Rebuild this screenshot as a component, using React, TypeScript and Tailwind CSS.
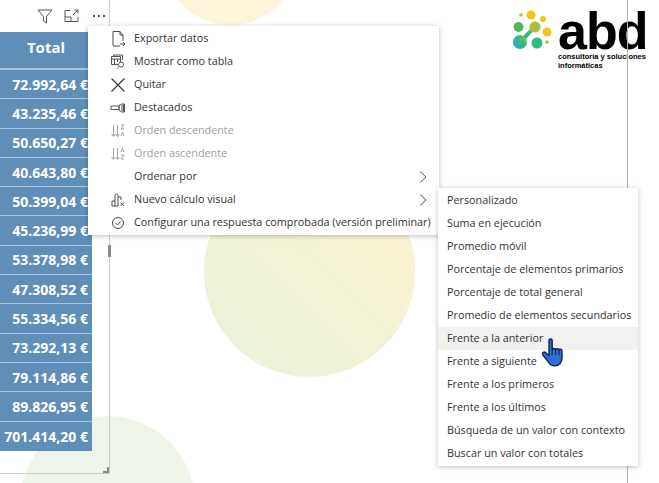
const rows = [
  "72.992,64 €",
  "43.235,46 €",
  "50.650,27 €",
  "40.643,80 €",
  "50.399,04 €",
  "45.236,99 €",
  "53.378,98 €",
  "47.308,52 €",
  "55.334,56 €",
  "73.292,13 €",
  "79.114,86 €",
  "89.826,95 €",
  "701.414,20 €",
];

const subItems = [
  "Personalizado",
  "Suma en ejecución",
  "Promedio móvil",
  "Porcentaje de elementos primarios",
  "Porcentaje de total general",
  "Promedio de elementos secundarios",
  "Frente a la anterior",
  "Frente a siguiente",
  "Frente a los primeros",
  "Frente a los últimos",
  "Búsqueda de un valor con contexto",
  "Buscar un valor con totales",
];

const ExportIcon = () => (
  <svg width="16" height="16" viewBox="0 0 16 16" fill="none" stroke="#4a4a4a" strokeWidth="1">
    <path d="M3 .5h7l3 3.500v6M10 .5V4h3M3 .5v13.500a1 1 0 0 0 1 1h6" />
    <path d="M10 13h5M13 11l2 2-2 2" />
  </svg>
);

const TableIcon = () => (
  <svg width="16" height="16" viewBox="0 0 16 16" fill="none" stroke="#555" strokeWidth="1">
    <path d="M1.500 2.500h9v8h-9zM1.500 5h9M4.500 5v5.500M7.500 5v3" />
    <path d="M3.500 2.500V1h9v5" />
    <circle cx="11" cy="10.500" r="2.500" fill="#fff" />
    <path d="M9 12.500L7 14.500" />
  </svg>
);

const CloseIcon = () => (
  <svg width="16" height="16" viewBox="0 0 16 16" fill="none" stroke="#333" strokeWidth="1.100">
    <path d="M1.500 1.500l13 13M14.500 1.500l-13 13" />
  </svg>
);

const SpotlightIcon = () => (
  <svg width="16" height="16" viewBox="0 0 16 16" fill="none" stroke="#555" strokeWidth="1">
    <path d="M1 6h8v3.500H1z" />
    <path d="M9 5.500l2.500-1.500h3v8h-3L9 10z" />
    <path d="M12 4.500v7M13.500 4.500v7" />
  </svg>
);

const SortIcon = ({ down }: { down: boolean }) => (
  <svg width="16" height="16" viewBox="0 0 16 16" fill="none" stroke="#a3a3a3" strokeWidth="1">
    <path d="M3.500 2v11M1.500 11l2 2.500 2-2.500" />
    <path d="M7.500 2v11M5.500 11l2 2.500 2-2.500" />
    <path d={down ? "M11 2h3l-3 4h3M11 13l1.500-4 1.500 4" : "M11 6l1.500-4L14 6M11 9h3l-3 4h3"} />
  </svg>
);

const CalcIcon = () => (
  <svg width="16" height="16" viewBox="0 0 16 16" fill="none" stroke="#4a4a4a" strokeWidth="1">
    <path d="M2 14V9h3V3.500a1.500 1.500 0 0 1 3 0V5h3v3M2 14h6M5 9v5M8 5v9" />
    <path d="M10.500 10.500l3.500 3.500M14 10.500l-3.500 3.500" />
  </svg>
);

const CheckIcon = () => (
  <svg width="16" height="16" viewBox="0 0 16 16" fill="none" stroke="#4a4a4a" strokeWidth="1">
    <circle cx="8" cy="8" r="5.500" />
    <path d="M5.500 8l2 2 3-3.500" />
  </svg>
);

const Chevron = () => (
  <svg width="8" height="12" viewBox="0 0 8 12" fill="none" stroke="#555" strokeWidth="1">
    <path d="M1 0.500l6 5.500-6 5.500" />
  </svg>
);

const Hand = () => (
  <svg width="25" height="31" viewBox="0 0 28 34">
    <path
      d="M9 3.500c0-2.400 3.500-2.400 3.500 0V14c.5-2 3.500-2 3.800 0 .5-1.800 3.500-1.800 3.800.3.500-1.500 3.400-1.200 3.400 1v7.500c0 5-3 9.200-8 9.200-4 0-6-2-8-5.500L2 19.500c-1.200-2.200 1.500-4 3.300-2.300L9 20.500z"
      fill="#2f6fd6"
      stroke="#10234f"
      strokeWidth="1.600"
      strokeLinejoin="round"
    />
    <path d="M12.500 14v6M16.300 14v6M20.100 14.300v6" stroke="#10234f" strokeWidth="1.200" />
  </svg>
);

const MenuRow = ({
  label,
  icon,
  muted,
  arrow,
}: {
  label: string;
  icon?: React.ReactNode;
  muted?: boolean;
  arrow?: boolean;
}) => (
  <div className={`h-[23px] flex items-center ${muted ? "text-[#a0a0a0]" : "text-[#333]"}`}>
    <div className="w-[46px] shrink-0 flex justify-end pr-[8px]">{icon}</div>
    <span className="flex-1 whitespace-nowrap">{label}</span>
    {arrow && (
      <div className="pr-[12px]">
        <Chevron />
      </div>
    )}
  </div>
);

const Logo = () => (
  <div className="flex items-start gap-[3px] pt-[10px] pr-[11px]">
    <svg width="42" height="42" viewBox="0 0 42 42">
      <defs>
        <linearGradient id="blob" x1="0" y1="1" x2="1" y2="0">
          <stop offset="0" stopColor="#2f9fdc" />
          <stop offset="0.55" stopColor="#2dbb8a" />
          <stop offset="1" stopColor="#a8c23a" />
        </linearGradient>
      </defs>
      <circle cx="18" cy="5" r="4.500" fill="#f8c313" />
      <circle cx="8" cy="5" r="1.800" fill="#a8c83a" />
      <circle cx="30" cy="9" r="3" fill="#f8c313" />
      <circle cx="5.500" cy="17" r="5" fill="#4fb95a" />
      <circle cx="34" cy="22" r="4.500" fill="#f4c51e" />
      <path d="M7 32C14 26 14 24 22 17" stroke="url(#blob)" strokeWidth="4" fill="none" />
      <circle cx="22" cy="17" r="5.500" fill="#a8c23a" />
      <circle cx="7" cy="32" r="7" fill="url(#blob)" />
      <circle cx="24" cy="33" r="5.500" fill="#2ebb80" />
      <circle cx="34" cy="32" r="1.800" fill="#a0c63a" />
    </svg>
    <div className="w-[90px] font-['Liberation_Sans',sans-serif] text-black font-bold">
      <div className="text-[52px] leading-[42px] tracking-[-1px] h-[42px]">abd</div>
      <div className="text-[7.500px] leading-[9px] whitespace-nowrap">consultoría y soluciones</div>
      <div className="text-[7.500px] leading-[9px]">informáticas</div>
    </div>
  </div>
);

export default function App() {
  return (
    <div className="relative w-[659px] h-[483px] overflow-hidden bg-white font-['Open_Sans',sans-serif] text-[10.800px] flex justify-between items-start">
      {/* background shapes of the report */}
      <div className="absolute left-[163px] top-[-110px] w-[135px] h-[135px] rounded-full bg-[#fdf4dc]" />
      <div className="absolute left-[204px] top-[166px] w-[211px] h-[211px] rounded-full bg-gradient-to-tr from-[#e8f3dd] to-[#fdf1cf]" />
      <div className="absolute left-[20px] top-[416px] w-[175px] h-[175px] rounded-full bg-[#edf5e8]" />
      <div className="absolute left-[627px] top-0 w-px h-full bg-[#b5b5b5]" />

      <div className="relative w-[110px] h-[474px] border-r border-b border-[#c9d0c9]">
        <div className="h-[32px] flex items-center gap-[11px] pl-[37px] text-[#555]">
          <svg width="16" height="15" viewBox="0 0 16 15" fill="none" stroke="#555" strokeWidth="1">
            <path d="M1 1h14L9.500 7.500V14L6.500 12V7.500z" />
          </svg>
          <svg width="15" height="14" viewBox="0 0 15 14" fill="none" stroke="#555" strokeWidth="1">
            <path d="M6 1.500H1v11h13V8M1 8h6v4.500M9 6l5-5M10.500 1H14v3.500" />
          </svg>
          <span className="ml-[3px] flex gap-[3px]">
            <i className="w-[2px] h-[2px] bg-[#555]" />
            <i className="w-[2px] h-[2px] bg-[#555]" />
            <i className="w-[2px] h-[2px] bg-[#555]" />
          </span>
        </div>
        <div className="w-[92px] bg-[#5f8fb8] text-white font-bold">
          <div className="h-[38px] flex items-center justify-center pb-[6px] text-[15px] border-b-2 border-[#a9c4dc]">Total</div>
          {rows.map((r) => (
            <div
              key={r}
              className="h-[29.300px] flex items-center justify-end pr-[4px] text-[14px] border-b border-[#a9c4dc] last:border-b-0 whitespace-nowrap"
            >
              {r}
            </div>
          ))}
        </div>
        <div className="absolute right-[-2px] top-[245px] w-[3px] h-[12px] bg-[#8a8a8a]" />
        <div className="absolute right-[0px] bottom-[0px] w-[6px] h-[6px] border-r-2 border-b-2 border-[#8a8a8a]" />
      </div>

      <Logo />

      <div className="absolute left-[88px] top-[26px] w-[351px] py-[1px] bg-white shadow-[0_1px_5px_rgba(0,0,0,0.25)]">
        <MenuRow label="Exportar datos" icon={<ExportIcon />} />
        <MenuRow label="Mostrar como tabla" icon={<TableIcon />} />
        <MenuRow label="Quitar" icon={<CloseIcon />} />
        <MenuRow label="Destacados" icon={<SpotlightIcon />} />
        <MenuRow label="Orden descendente" icon={<SortIcon down />} muted />
        <MenuRow label="Orden ascendente" icon={<SortIcon down={false} />} muted />
        <MenuRow label="Ordenar por" arrow />
        <MenuRow label="Nuevo cálculo visual" icon={<CalcIcon />} arrow />
        <MenuRow label="Configurar una respuesta comprobada (versión preliminar)" icon={<CheckIcon />} />
      </div>

      <div className="absolute left-[438px] top-[188px] w-[200px] py-[1px] bg-white shadow-[0_1px_5px_rgba(0,0,0,0.25)] text-[#333]">
        {subItems.map((s) => (
          <div
            key={s}
            className={`h-[23px] flex items-center pl-[9px] whitespace-nowrap ${s === "Frente a la anterior" ? "bg-[#f1f1f0]" : ""}`}
          >
            {s}
          </div>
        ))}
      </div>

      <div className="absolute left-[541px] top-[337px]">
        <Hand />
      </div>
    </div>
  );
}
